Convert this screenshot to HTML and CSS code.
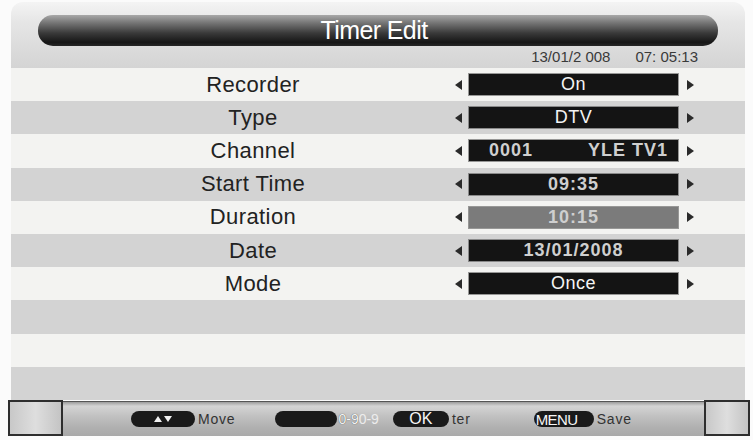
FILE: index.html
```html
<!DOCTYPE html>
<html>
<head>
<meta charset="utf-8">
<link rel="stylesheet" href="styles.css">
</head>
<body>
<div class="screen">
  <div class="header">
    <div class="titlebar">Timer Edit</div>
    <div class="clock"><span>13/01/2 008</span><span>07: 05:13</span></div>
  </div>
  <div class="rows">
    <div class="row light">
      <div class="label">Recorder</div>
      <div class="ctrl"><span class="arr left"></span><div class="box"><span>On</span></div><span class="arr right"></span></div>
    </div>
    <div class="row dark">
      <div class="label">Type</div>
      <div class="ctrl"><span class="arr left"></span><div class="box"><span>DTV</span></div><span class="arr right"></span></div>
    </div>
    <div class="row light">
      <div class="label">Channel</div>
      <div class="ctrl"><span class="arr left"></span><div class="box split bold"><span>0001</span><span>YLE TV1</span></div><span class="arr right"></span></div>
    </div>
    <div class="row dark">
      <div class="label">Start Time</div>
      <div class="ctrl"><span class="arr left"></span><div class="box bold"><span>09:35</span></div><span class="arr right"></span></div>
    </div>
    <div class="row light">
      <div class="label">Duration</div>
      <div class="ctrl"><span class="arr left"></span><div class="box bold dim"><span>10:15</span></div><span class="arr right"></span></div>
    </div>
    <div class="row dark">
      <div class="label">Date</div>
      <div class="ctrl"><span class="arr left"></span><div class="box bold"><span>13/01/2008</span></div><span class="arr right"></span></div>
    </div>
    <div class="row light">
      <div class="label">Mode</div>
      <div class="ctrl"><span class="arr left"></span><div class="box"><span>Once</span></div><span class="arr right"></span></div>
    </div>
    <div class="row dark"></div>
    <div class="row light"></div>
    <div class="row dark"></div>
  </div>
  <div class="footer">
    <div class="fbox"></div>
    <div class="fbar">
      <div class="hint h1"><span class="pill arrows"><svg width="18" height="8" viewBox="0 0 18 8"><polygon points="0,7 4,1 8,7" fill="#f2f2f2"/><polygon points="10,1 18,1 14,7" fill="#f2f2f2"/></svg></span><span class="htext">Move</span></div>
      <div class="hint h2"><span class="pill wide"></span><span class="htext bright">0-9</span><span class="htext faded">0-9</span></div>
      <div class="hint h3"><span class="pill ok">OK</span><span class="htext">ter</span></div>
      <div class="hint h4"><span class="pill menu">MENU</span><span class="htext">Save</span></div>
    </div>
    <div class="fbox rbox"></div>
  </div>
</div>
</body>
</html>
```

FILE: styles.css
```css
html, body {
  margin: 0;
  padding: 0;
  background: #fbfbfb;
  width: 753px;
  height: 440px;
  overflow: hidden;
  font-family: "Liberation Sans", Arial, sans-serif;
}

.screen {
  display: flex;
  flex-direction: column;
  width: 753px;
  height: 440px;
}

.header {
  margin: 2px 8px 0 11px;
  height: 66px;
  border-radius: 12px 12px 0 0;
  background: linear-gradient(#f4f4f4 0%, #e6e6e6 30%, #dadada 75%, #d4d4d4 100%);
  display: flex;
  flex-direction: column;
}

.titlebar {
  margin: 13px 27px 0 27px;
  height: 31px;
  border-radius: 15px;
  background: linear-gradient(#a8a8a8 0%, #767676 25%, #3a3a3a 58%, #161616 88%, #262626 100%);
  color: #fff;
  font-size: 25px;
  letter-spacing: -0.6px;
  line-height: 30px;
  text-align: center;
  text-indent: -8px;
}

.clock {
  display: flex;
  justify-content: flex-end;
  gap: 25px;
  padding-right: 47px;
  margin-top: 2px;
  font-size: 15px;
  color: #3a3a3a;
}

.rows {
  margin: 0 8px 0 11px;
  height: 332px;
  display: grid;
  grid-template-rows: repeat(10, 1fr);
}

.row {
  display: flex;
  align-items: center;
}

.row.light { background: #f3f3f1; }
.row.dark { background: #d3d3d3; }

.label {
  width: 300px;
  margin-left: 92px;
  text-align: center;
  font-size: 22px;
  letter-spacing: 0.4px;
  color: #222;
}

.ctrl {
  display: flex;
  align-items: center;
  margin-left: 52px;
}

.arr {
  width: 0;
  height: 0;
  border-top: 5px solid transparent;
  border-bottom: 5px solid transparent;
}

.arr.left { border-right: 7px solid #2a2a2a; }
.arr.right { border-left: 7px solid #2a2a2a; }

.box {
  width: 209px;
  height: 21px;
  margin: 0 9px 0 7px;
  background: #141414;
  box-shadow: 0 0 0 1px rgba(90, 90, 90, 0.6);
  color: #f4f4f4;
  font-size: 18px;
  letter-spacing: 0.5px;
  line-height: 21px;
  display: flex;
  justify-content: center;
}

.box.bold {
  font-weight: bold;
  color: #cfcfcf;
  letter-spacing: 1px;
}

.box.split {
  justify-content: space-between;
  padding: 0 10px 0 20px;
  box-sizing: border-box;
}

.box.dim {
  background: #7b7b7b;
  color: #cfcfcf;
}

.footer {
  display: flex;
  height: 36px;
  padding: 0 3px 0 8px;
}

.fbox {
  width: 51px;
  height: 32px;
  border: 2px solid #2e2e2e;
  background: linear-gradient(90deg, #c8c8c8, #dedede 50%, #c4c4c4);
}

.rbox {
  width: 42px;
}

.fbar {
  flex: 1;
  height: 34px;
  margin-top: 1px;
  border-top: 1px solid #555;
  background: linear-gradient(#9c9c9c 0%, #d4d4d4 12%, #c2c2c2 40%, #b0b0b0 75%, #a8a8a8 100%);
  display: flex;
  align-items: center;
  padding-left: 68px;
}

.hint {
  display: flex;
  align-items: center;
}

.h2 { margin-left: 40px; }
.h3 { margin-left: 14px; }
.h4 { margin-left: 63px; }

.pill {
  height: 16px;
  border-radius: 8px;
  background: #1a1a1a;
  color: #f6f6f6;
  display: flex;
  align-items: center;
  justify-content: center;
  font-size: 16px;
}

.pill.arrows { width: 64px; }
.pill.wide { width: 62px; }
.pill.ok { width: 56px; }
.pill.menu {
  width: 60px;
  font-size: 15px;
  letter-spacing: -0.6px;
  justify-content: flex-start;
  padding-left: 2px;
  box-sizing: border-box;
}

.htext {
  margin-left: 3px;
  font-size: 14px;
  letter-spacing: 0.8px;
  color: #333;
}

.htext.bright {
  margin-left: 1px;
  letter-spacing: 0;
  color: #f4f4f4;
  text-shadow: 0 0 1px #333;
}
.htext.faded {
  margin-left: 0;
  letter-spacing: 0;
  color: #ececec;
}
```
